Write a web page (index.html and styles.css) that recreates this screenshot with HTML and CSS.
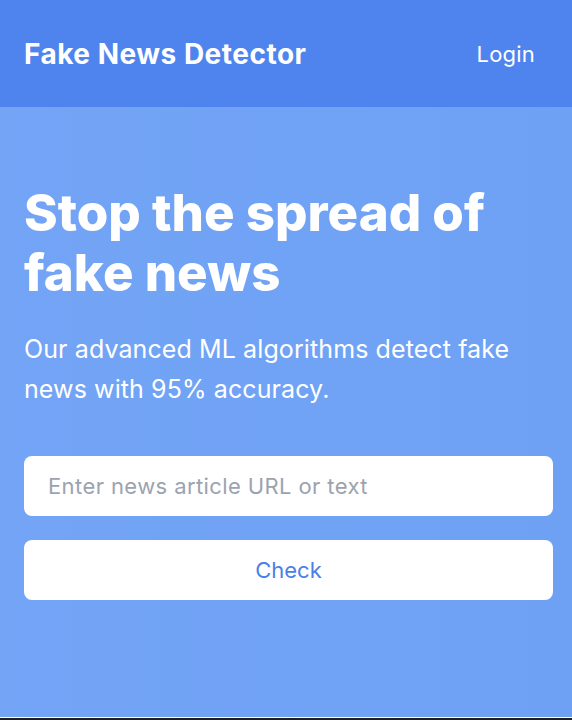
FILE: index.html
```html
<!DOCTYPE html>
<html>
<head>
<meta charset="utf-8">
<link rel="stylesheet" href="styles.css">
</head>
<body>
<header class="topbar">
  <div class="brand">Fake News Detector</div>
  <a class="login" href="#">Login</a>
</header>
<main class="hero">
  <h1 class="title">Stop the spread of fake news</h1>
  <p class="lead">Our advanced ML algorithms detect fake news with 95% accuracy.</p>
  <form class="check-form">
    <input class="field" type="text" placeholder="Enter news article URL or text">
    <button class="btn" type="button">Check</button>
  </form>
</main>
<footer class="foot"></footer>
</body>
</html>
```
FILE: styles.css
```css
html, body {
  margin: 0;
  padding: 0;
}
body {
  font-family: Inter, "Noto Sans", sans-serif;
  background: #ffffff;
}
.topbar {
  height: 107px;
  box-sizing: border-box;
  background: #4f84ee;
  display: flex;
  align-items: center;
  justify-content: space-between;
  padding: 0 37px 0 24px;
}
.brand {
  color: #fff;
  font-weight: 700;
  font-size: 28px;
  letter-spacing: 0.5px;
}
.login {
  color: #fff;
  text-decoration: none;
  font-size: 22px;
  letter-spacing: 0.2px;
}
.hero {
  height: 610px;
  box-sizing: border-box;
  background: linear-gradient(90deg, #73a4f6, #6ea1f4);
  padding: 76px 19px 0 24px;
  margin-bottom: 1px;
}
.title {
  margin: 0;
  color: #fff;
  font-size: 51px;
  line-height: 60px;
  font-weight: 800;
  letter-spacing: 0;
}
.lead {
  margin: 26px 0 0;
  color: #fff;
  font-size: 25px;
  line-height: 40px;
  letter-spacing: 0.1px;
}
.check-form {
  margin-top: 47px;
  display: flex;
  flex-direction: column;
  gap: 24px;
}
.field, .btn {
  height: 60px;
  box-sizing: border-box;
  border: none;
  border-radius: 8px;
  background: #fff;
  font-family: Inter, "Noto Sans", sans-serif;
  font-size: 22px;
  outline: none;
}
.field {
  padding: 0 24px;
  color: #374151;
  letter-spacing: 0.4px;
}
.field::placeholder {
  color: #9ca3af;
}
.btn {
  color: #4a80e8;
  cursor: pointer;
}
.foot {
  height: 3px;
  background: #1f1f1f;
}
```
